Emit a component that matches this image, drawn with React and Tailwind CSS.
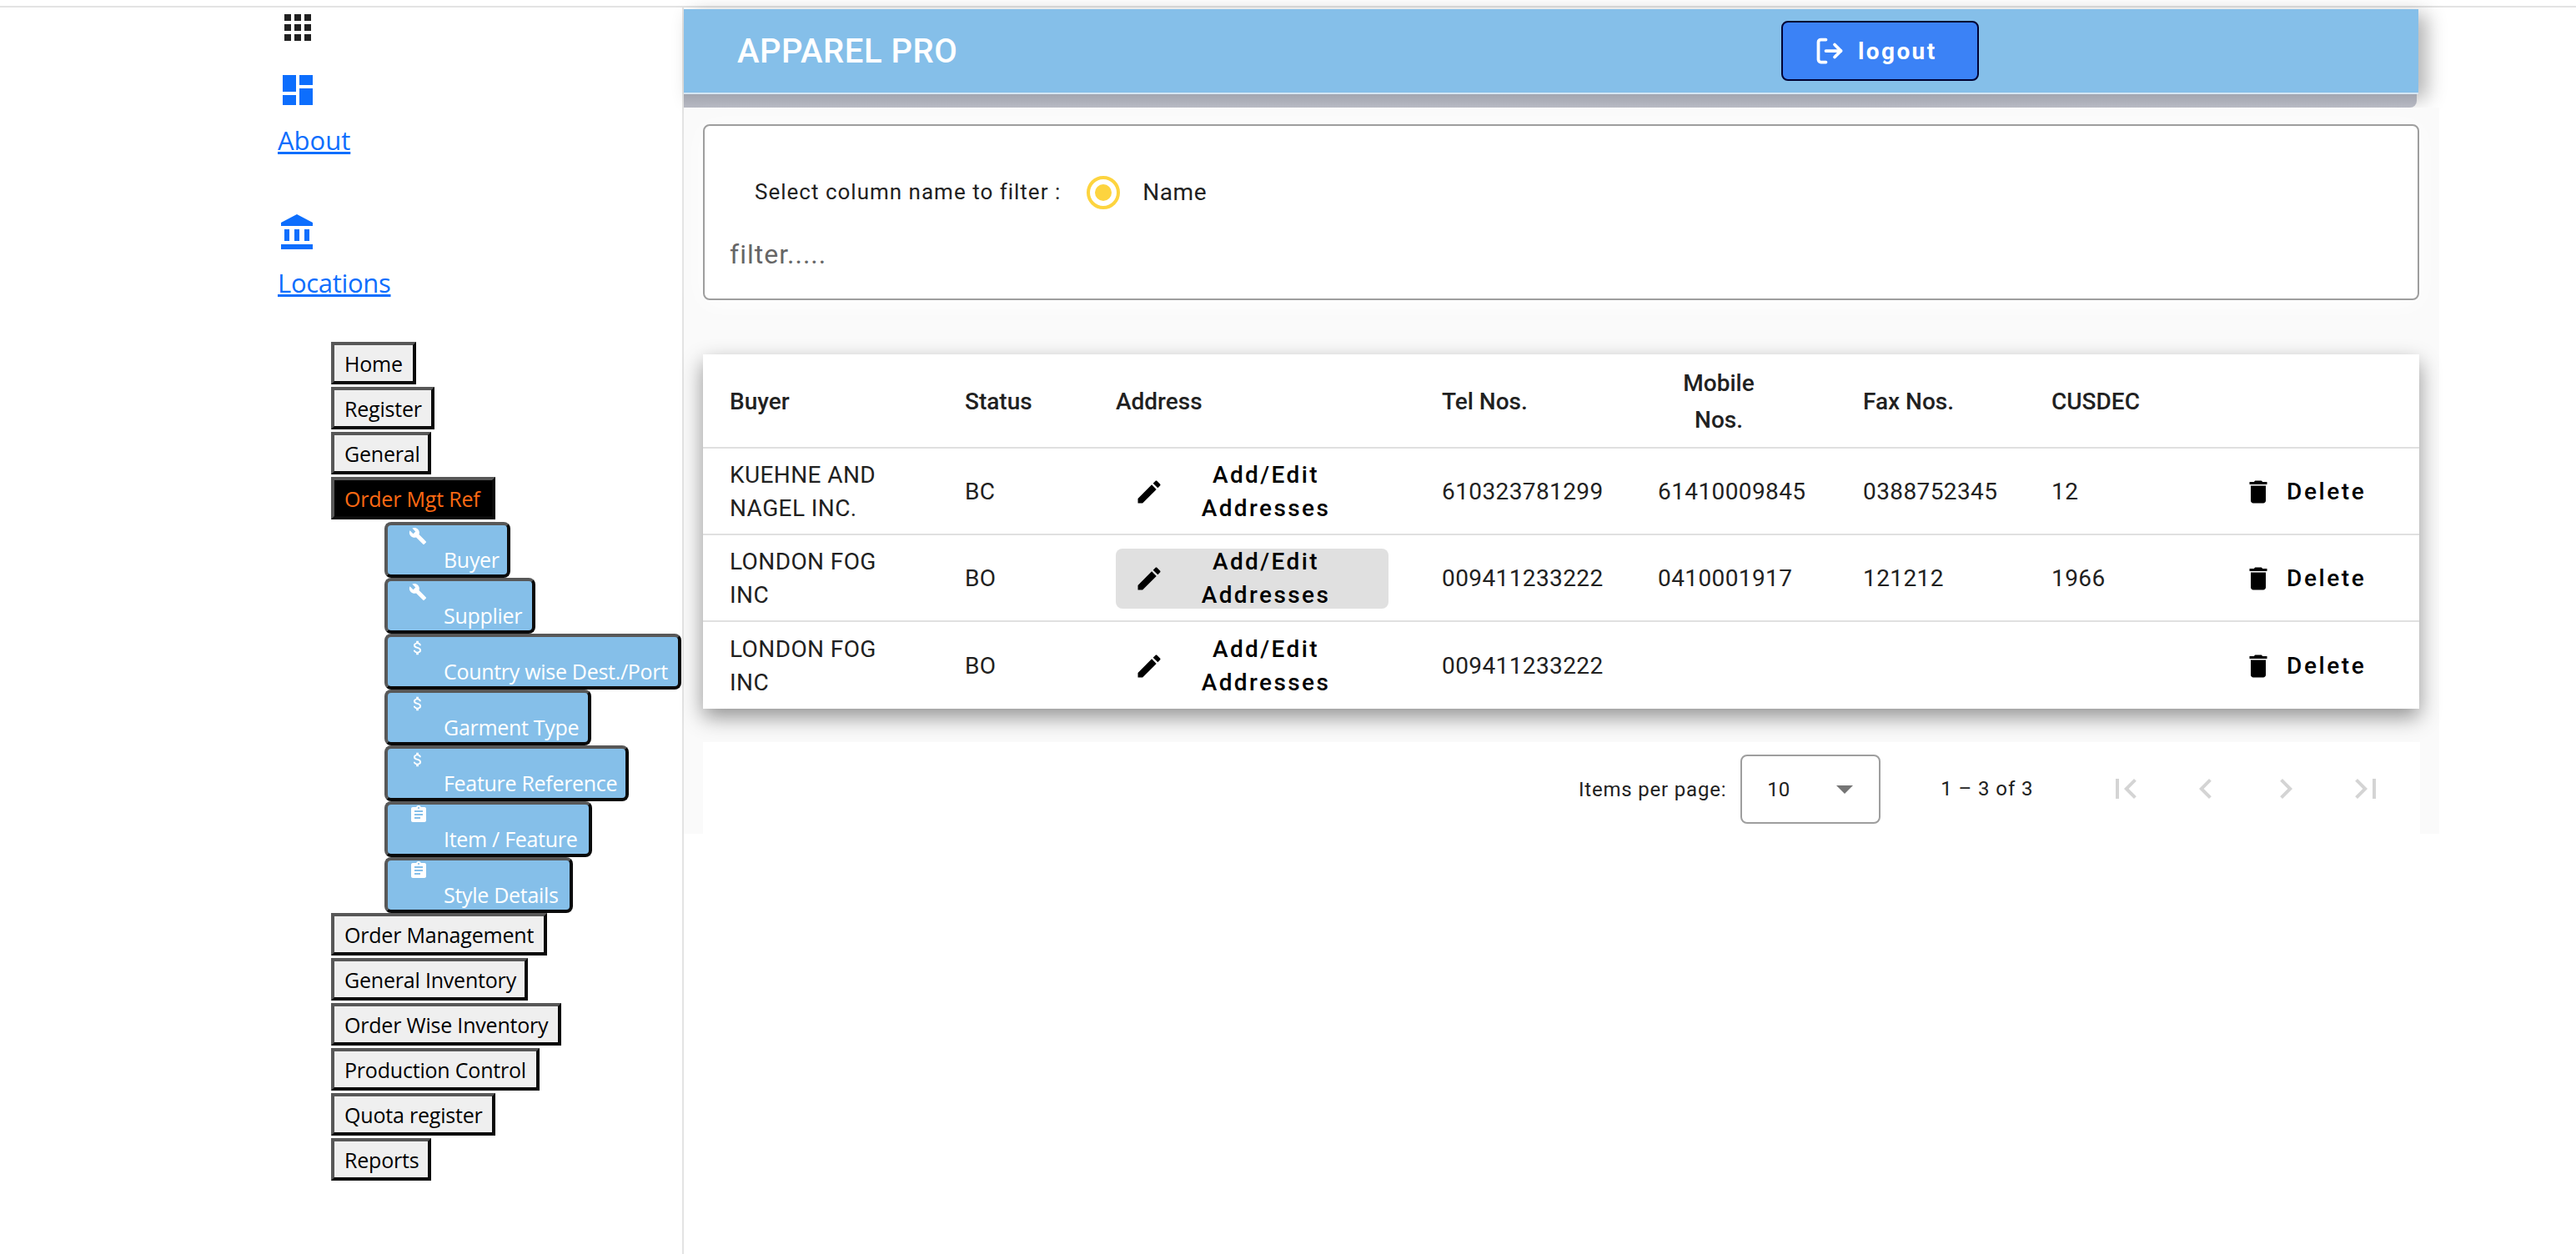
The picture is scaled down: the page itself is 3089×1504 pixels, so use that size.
import { LogOut } from "lucide-react";

const paths = {
  apps: "M4 8h4V4H4v4zm6 12h4v-4h-4v4zm-6 0h4v-4H4v4zm0-6h4v-4H4v4zm6 0h4v-4h-4v4zm6-10v4h4V4h-4zm-6 4h4V4h-4v4zm6 6h4v-4h-4v4zm0 6h4v-4h-4v4z",
  dashboard: "M3 13h8V3H3v10zm0 8h8v-6H3v6zm10 0h8V11h-8v10zm0-18v6h8V3h-8z",
  bank: "M4 10v7h3v-7H4zm6 0v7h3v-7h-3zM2 22h19v-3H2v3zm14-12v7h3v-7h-3zm-4.5-9L2 6v2h19V6l-9.5-5z",
  build: "M22.7 19l-9.1-9.1c.9-2.3.4-5-1.5-6.9-2-2-5-2.4-7.4-1.3L9 6 6 9 1.6 4.7C.4 7.1.9 10.1 2.9 12.1c1.9 1.9 4.6 2.4 6.9 1.5l9.1 9.1c.4.4 1 .4 1.4 0l2.3-2.3c.5-.4.5-1.1.1-1.4z",
  money: "M11.8 10.9c-2.27-.59-3-1.2-3-2.15 0-1.09 1.01-1.85 2.7-1.85 1.78 0 2.44.85 2.5 2.1h2.21c-.07-1.72-1.12-3.3-3.21-3.81V3h-3v2.16c-1.94.42-3.5 1.68-3.5 3.61 0 2.31 1.91 3.46 4.7 4.13 2.5.6 3 1.48 3 2.41 0 .69-.49 1.79-2.7 1.79-2.06 0-2.87-.92-2.98-2.1h-2.2c.12 2.19 1.76 3.42 3.68 3.83V21h3v-2.15c1.95-.37 3.5-1.5 3.5-3.55 0-2.84-2.43-3.81-4.7-4.4z",
  assignment: "M19 3h-4.18C14.4 1.84 13.3 1 12 1c-1.3 0-2.4.84-2.82 2H5c-1.1 0-2 .9-2 2v14c0 1.1.9 2 2 2h14c1.1 0 2-.9 2-2V5c0-1.1-.9-2-2-2zm-7 0c.55 0 1 .45 1 1s-.45 1-1 1-1-.45-1-1 .45-1 1-1zm2 14H7v-2h7v2zm3-4H7v-2h10v2zm0-4H7V7h10v2z",
  edit: "M3 17.25V21h3.75L17.81 9.94l-3.75-3.75L3 17.25zM20.71 7.04c.39-.39.39-1.02 0-1.41l-2.34-2.34c-.39-.39-1.02-.39-1.41 0l-1.83 1.83 3.75 3.75 1.83-1.83z",
  trash: "M6 19c0 1.1.9 2 2 2h8c1.1 0 2-.9 2-2V7H6v12zM19 4h-3.5l-1-1h-5l-1 1H5v2h14V4z",
  first: "M18.41 16.59L13.82 12l4.59-4.59L17 6l-6 6 6 6zM6 6h2v12H6z",
  last: "M5.59 7.41L10.18 12 5.59 16.59 7 18l6-6-6-6zM16 6h2v12h-2z",
  prev: "M15.41 7.41L14 6l-6 6 6 6 1.41-1.41L10.83 12z",
  next: "M10 6L8.59 7.41 13.17 12l-4.58 4.59L10 18l6-6z",
};

const Icon = ({ name, className }) => (
  <svg viewBox="0 0 24 24" fill="currentColor" className={className}>
    <path d={paths[name]} />
  </svg>
);

const rawBorder = "border-4 border-t-[#585858] border-l-[#585858] border-r-[#0a0a0a] border-b-[#0a0a0a]";

const NavButton = ({ label, className, active }) => (
  <button
    className={`mb-[3px] block h-[51px] pl-3 text-left text-[25px] leading-[36px] tracking-[-0.2px] ${rawBorder} ${active ? "bg-black text-[#ff6a13]" : "bg-[#efefef] text-black"} ${className}`}
  >
    {label}
  </button>
);

const SubButton = ({ label, icon, className, iconClass = "mt-[2px] h-[26px] w-[26px]" }) => (
  <button
    className={`flex h-[67px] flex-col justify-between rounded-lg pb-px pl-[23px] text-left text-[25px] leading-[34px] tracking-[-0.3px] text-white bg-[#85bfe9] ${rawBorder} ${className}`}
  >
    <Icon name={icon} className={iconClass} />
    <span className="ml-[44px] whitespace-nowrap">{label}</span>
  </button>
);

const Sidebar = () => (
  <aside className="w-[820px] shrink-0 border-r-2 border-[#e3e3e3] bg-white pl-[333px] font-['Open_Sans',sans-serif]">
    <Icon name="apps" className="h-12 w-12 text-[#212121]" />
    <Icon name="dashboard" className="mt-[27px] h-12 w-12 text-[#0d6efd]" />
    <a className="mt-3 block text-[31px] leading-[48px] text-[#0d6efd] underline">About</a>
    <Icon name="bank" className="mt-[63px] h-12 w-12 text-[#0d6efd]" />
    <a className="mt-3 block text-[31px] leading-[48px] tracking-[-0.3px] text-[#0d6efd] underline">Locations</a>
    <div className="mt-[47px] ml-16 flex flex-col">
      <NavButton label="Home" className="w-[102px]" />
      <NavButton label="Register" className="w-[124px]" />
      <NavButton label="General" className="w-[120px]" />
      <NavButton label="Order Mgt Ref" active className="w-[197px]" />
      <div className="ml-16 flex flex-col">
        <SubButton label="Buyer" icon="build" className="w-[151px]" />
        <SubButton label="Supplier" icon="build" className="w-[181px]" />
        <SubButton label="Country wise Dest./Port" icon="money" className="w-[356px]" />
        <SubButton label="Garment Type" icon="money" className="w-[248px]" />
        <SubButton label="Feature Reference" icon="money" className="w-[293px]" />
        <SubButton label="Item / Feature" icon="assignment" iconClass="h-[28px] w-[28px]" className="w-[249px]" />
        <SubButton label="Style Details" icon="assignment" iconClass="h-[28px] w-[28px]" className="w-[226px]" />
      </div>
      <NavButton label="Order Management" className="w-[259px]" />
      <NavButton label="General Inventory" className="w-[236px]" />
      <NavButton label="Order Wise Inventory" className="w-[276px]" />
      <NavButton label="Production Control" className="w-[250px]" />
      <NavButton label="Quota register" className="w-[197px]" />
      <NavButton label="Reports" className="w-[120px]" />
    </div>
  </aside>
);

const rows = [
  { buyer: "KUEHNE AND NAGEL INC.", status: "BC", tel: "610323781299", mobile: "61410009845", fax: "0388752345", cusdec: "12" },
  { buyer: "LONDON FOG INC", status: "BO", tel: "009411233222", mobile: "0410001917", fax: "121212", cusdec: "1966", focused: true },
  { buyer: "LONDON FOG INC", status: "BO", tel: "009411233222", mobile: "", fax: "", cusdec: "" },
];

const gridCols = "grid grid-cols-[282px_181px_391px_259px_246px_226px_230px_1fr] items-center pl-8 pt-[2px]";

const DataTable = () => (
  <div className="mt-[65px] w-[2058px] bg-white text-[28px] leading-[40px] text-[#212121] shadow-[0_10px_24px_rgba(0,0,0,0.42)]">
    <div className={`${gridCols} h-[113px] border-b-2 border-[#e0e0e0] font-medium`}>
      <div>Buyer</div>
      <div>Status</div>
      <div>Address</div>
      <div>Tel Nos.</div>
      <div className="w-[146px] text-center leading-[44px]">Mobile Nos.</div>
      <div>Fax Nos.</div>
      <div>CUSDEC</div>
      <div />
    </div>
    {rows.map((row, i) => (
      <div key={i} className={`${gridCols} h-[104px] tracking-[0.4px] ${i < 2 ? "border-b-2 border-[#e0e0e0]" : ""}`}>
        <div className="w-[200px]">{row.buyer}</div>
        <div>{row.status}</div>
        <div>
          <div className={`flex h-[72px] w-[327px] items-center rounded-lg pr-[25px] pl-[22px] font-medium tracking-[2.4px] text-black ${row.focused ? "bg-[#e0e0e0]" : ""}`}>
            <Icon name="edit" className="h-9 w-9 shrink-0" />
            <span className="flex-1 text-center">Add/Edit Addresses</span>
          </div>
        </div>
        <div>{row.tel}</div>
        <div>{row.mobile}</div>
        <div>{row.fax}</div>
        <div>{row.cusdec}</div>
        <div className="flex items-center gap-4 font-medium tracking-[2.6px] text-black">
          <Icon name="trash" className="h-9 w-9 shrink-0" />
          <span>Delete</span>
        </div>
      </div>
    ))}
  </div>
);

const Pagination = () => (
  <div className="mt-10 flex h-[111px] w-[2059px] items-start bg-white pl-[1050px] text-[24px] text-[#212121]">
    <span className="mt-[41px] leading-[32px] tracking-[0.8px]">Items per page:</span>
    <div className="mt-[15px] ml-[17px] flex h-[83px] w-[168px] items-center rounded-lg border-2 border-[#9e9e9e] pl-[30px]">
      <span>10</span>
      <span className="ml-[56px] h-0 w-0 border-x-[10px] border-t-[10px] border-x-transparent border-t-[#757575]" />
    </div>
    <span className="mt-[40px] ml-[72px] leading-[32px] tracking-[0.9px]">1 – 3 of 3</span>
    <div className="mt-[32px] ml-[87px] flex gap-12 text-[#d4d4d4]">
      <Icon name="first" className="h-12 w-12" />
      <Icon name="prev" className="h-12 w-12" />
      <Icon name="next" className="h-12 w-12" />
      <Icon name="last" className="h-12 w-12" />
    </div>
  </div>
);

export default function App() {
  return (
    <div className="min-h-screen overflow-hidden bg-white pt-[7px] font-['Roboto',sans-serif]">
      <div className="h-[2px] bg-[#e3e3e3]" />
      <div className="flex min-h-[1495px]">
        <Sidebar />
        <main className="flex-1">
          <header className="mt-[2px] flex h-[102px] w-[2080px] items-center border-b-2 border-[#d5e6f3] bg-[#85bfe9] pl-[64px] shadow-[10px_6px_22px_rgba(0,0,0,0.3)]">
            <h1 className="mt-[2px] w-[269px] text-[40px] font-medium tracking-[0.5px] text-white">APPAREL PRO</h1>
            <button className="ml-[983px] flex h-[72px] w-[237px] items-center rounded-lg border-2 border-[#000033] bg-[#3b82f6] pl-[38px] text-[28px] font-bold tracking-[2.4px] text-white">
              <LogOut className="h-9 w-9" strokeWidth={2.5} />
              <span className="mt-[2px] ml-[16px]">logout</span>
            </button>
          </header>
          {/* band of the header's shadow, cut off by the content panel */}
          <div className="h-4 w-[2078px] rounded-br-lg bg-gradient-to-b from-[#a3a6b0] to-[#b6b8c2]" />
          <section className="relative h-[871px] w-[2105px] bg-[#fafafa] pt-5 pl-[23px]">
            <div className="flex h-[211px] w-[2058px] flex-col rounded-lg border-2 border-[#9e9e9e] bg-white shadow-[0_4px_30px_rgba(255,255,255,1)]">
              <div className="mt-[59px] flex items-center pl-[60px]">
                <span className="-mt-[2px] text-[26px] tracking-[1px] text-[#212121]">Select column name to filter :</span>
                <span className="ml-[31px] flex h-10 w-10 items-center justify-center rounded-full border-4 border-[#fdd43f]">
                  <span className="h-5 w-5 rounded-full bg-[#fdd43f]" />
                </span>
                <span className="ml-[27px] text-[28px] tracking-[0.6px] text-[#212121]">Name</span>
              </div>
              <div className="mt-[33px] pl-[30px] text-[32px] leading-[40px] tracking-[1px] text-[#666]">filter.....</div>
            </div>
            <DataTable />
            <Pagination />
          </section>
        </main>
      </div>
    </div>
  );
}
